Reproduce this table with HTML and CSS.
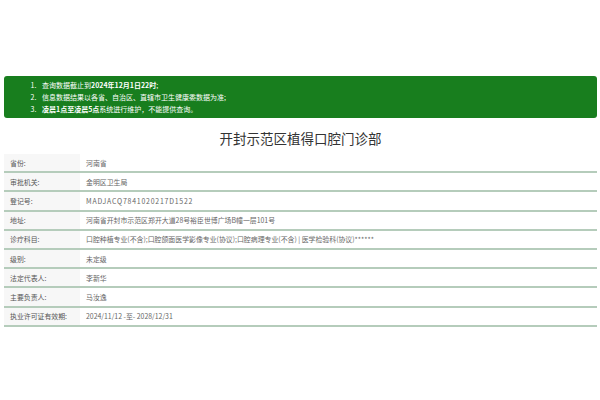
FILE: index.html
```html
<!DOCTYPE html>
<html lang="zh">
<head>
<meta charset="utf-8">
<link rel="stylesheet" href="styles.css">
</head>
<body>
<div class="page">
  <div class="notice">
    <ol>
      <li>查询数据截止到<b>2024年12月1日22时</b>;</li>
      <li>信息数据结果以各省、自治区、直辖市卫生健康委数据为准;</li>
      <li><b>凌晨1点至凌晨5点</b>系统进行维护，不能提供查询。</li>
    </ol>
  </div>
  <h1 class="title">开封示范区植得口腔门诊部</h1>
  <div class="table">
    <div class="row"><div class="label">省份:</div><div class="value">河南省</div></div>
    <div class="row"><div class="label">审批机关:</div><div class="value">金明区卫生局</div></div>
    <div class="row"><div class="label">登记号:</div><div class="value code">MADJACQ7841020217D1522</div></div>
    <div class="row"><div class="label">地址:</div><div class="value">河南省开封市示范区郑开大道28号裕臣世博广场B幢一层101号</div></div>
    <div class="row"><div class="label">诊疗科目:</div><div class="value">口腔种植专业(不含);口腔颌面医学影像专业(协议);口腔病理专业(不含) | 医学检验科(协议)******</div></div>
    <div class="row"><div class="label">级别:</div><div class="value">未定级</div></div>
    <div class="row"><div class="label">法定代表人:</div><div class="value">李新华</div></div>
    <div class="row"><div class="label">主要负责人:</div><div class="value">马汝逸</div></div>
    <div class="row"><div class="label">执业许可证有效期:</div><div class="value">2024/11/12 -至- 2028/12/31</div></div>
  </div>
</div>
</body>
</html>
```
FILE: styles.css
```css
html, body {
  margin: 0;
  padding: 0;
  background: #ffffff;
}
body {
  font-family: "Noto Sans CJK SC", "Noto Sans", sans-serif;
  color: #555;
}
.page {
  padding: 76px 3px 0 4px;
}
.notice {
  background: #187e1e;
  border-radius: 3px;
  height: 42px;
  box-sizing: border-box;
  padding-top: 3px;
  color: #fff;
  font-size: 7px;
}
.notice ol {
  margin: 0;
  padding-left: 34px;
}
.notice li {
  line-height: 12px;
  padding-left: 4px;
}
.notice b {
  font-weight: 700;
}
.title {
  margin: 0;
  text-align: center;
  font-size: 13.5px;
  font-weight: 400;
  color: #333;
  line-height: 20px;
  padding: 10px 0 6px;
}
.table {
  display: flex;
  flex-direction: column;
}
.row {
  display: flex;
  height: 17.2px;
  border-bottom: 2px solid #b5ccbb;
  font-size: 6.9px;
}
.label {
  width: 76px;
  flex: none;
  background: #f7f7f7;
  padding-left: 6px;
  box-sizing: border-box;
  display: flex;
  align-items: center;
  color: #555;
}
.value {
  padding-left: 6px;
  display: flex;
  align-items: center;
  color: #666;
  white-space: nowrap;
}
.code {
  letter-spacing: 0.8px;
}
```
